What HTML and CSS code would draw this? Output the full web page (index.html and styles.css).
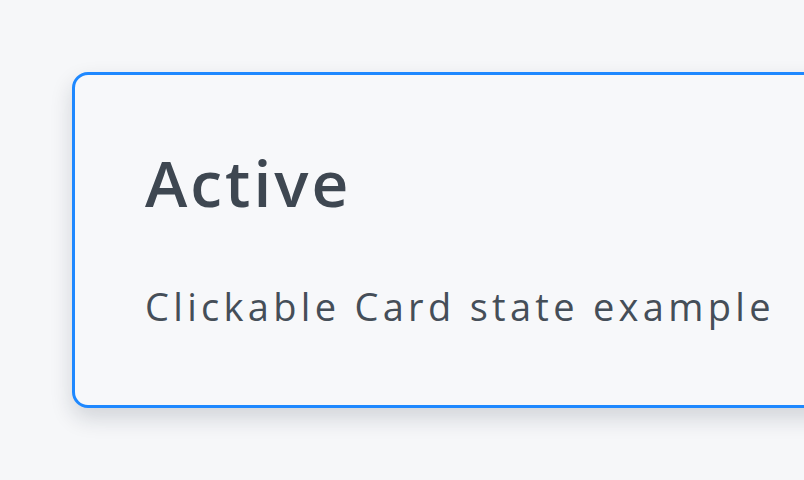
FILE: index.html
```html
<!DOCTYPE html>
<html>
<head>
<meta charset="utf-8">
<link rel="stylesheet" href="styles.css">
</head>
<body>
<div class="page">
  <div class="card">
    <h2 class="title">Active</h2>
    <p class="desc">Clickable Card state example</p>
  </div>
</div>
</body>
</html>
```
FILE: styles.css
```css
html, body {
  margin: 0;
  padding: 0;
  background: #f6f7f9;
}
body {
  overflow: hidden;
  height: 480px;
}
.page {
  padding: 72px 0 0 72px;
  width: 1200px;
}
.card {
  box-sizing: border-box;
  width: 900px;
  height: 336px;
  border: 3px solid #1e88ff;
  border-radius: 16px;
  background: #f7f8fa;
  box-shadow: 0 10px 22px rgba(20, 30, 50, 0.16);
  padding: 76px 0 0 70px;
  font-family: "Open Sans", sans-serif;
  color: #3e4751;
}
.title {
  margin: 0;
  font-size: 64px;
  font-weight: 600;
  line-height: 1;
  letter-spacing: 3px;
}
.desc {
  margin: 72px 0 0 0;
  font-size: 38px;
  line-height: 1;
  letter-spacing: 4.3px;
  color: #454e58;
}
```
